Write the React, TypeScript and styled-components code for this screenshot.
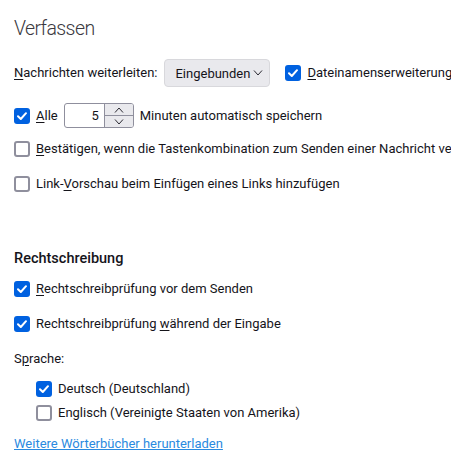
import styled, { createGlobalStyle } from "styled-components";

const Global = createGlobalStyle`
  html, body {
    margin: 0;
    padding: 0;
    background: #ffffff;
    overflow: hidden;
  }
  body {
    font-family: Roboto, "Noto Sans", sans-serif;
    font-size: 13px;
    color: #15141a;
  }
`;

const Page = styled.div`
  width: 451px;
  overflow: hidden;
  padding: 15px 0 0 14px;
  box-sizing: border-box;
  display: flex;
  flex-direction: column;
  white-space: nowrap;
`;

const Heading = styled.h1`
  margin: 0;
  font-size: 19.5px;
  font-weight: 300;
  letter-spacing: -0.6px;
  line-height: 28px;
  color: #3a3940;
`;

const SubHeading = styled.h2`
  margin: 0;
  font-size: 14.5px;
  font-weight: 500;
  line-height: 22px;
  color: #15141a;
`;

const Row = styled.div<{ $top?: number; $indent?: number }>`
  display: flex;
  align-items: center;
  gap: 6px;
  margin-top: ${(p) => p.$top ?? 0}px;
  padding-left: ${(p) => p.$indent ?? 0}px;
  min-height: 24px;
`;

const Box = styled.span<{ $checked?: boolean }>`
  box-sizing: border-box;
  width: 16px;
  height: 16px;
  border-radius: 3px;
  flex: none;
  display: inline-flex;
  align-items: center;
  justify-content: center;
  background: ${(p) => (p.$checked ? "#0061e0" : "#ffffff")};
  border: ${(p) => (p.$checked ? "none" : "2px solid #8f8f9d")};
`;

const Label = styled.span`
  line-height: 20px;
`;

const U = styled.span`
  text-decoration: underline;
  text-underline-offset: 2px;
`;

const Select = styled.div`
  box-sizing: border-box;
  height: 28px;
  padding: 0 6px 0 10px;
  margin-left: 1px;
  margin-right: 9px;
  display: inline-flex;
  align-items: center;
  gap: 3px;
  background: #e9e9ed;
  border: 1px solid #d8d8dc;
  border-radius: 4px;
`;

const Spinner = styled.div`
  box-sizing: border-box;
  display: inline-flex;
  height: 25px;
  border: 1px solid #8f8f9d;
  border-radius: 3px;
  overflow: hidden;
`;

const SpinValue = styled.div`
  width: 39px;
  display: flex;
  align-items: center;
  justify-content: flex-end;
  padding-right: 5px;
  box-sizing: border-box;
`;

const SpinButtons = styled.div`
  width: 28px;
  display: flex;
  flex-direction: column;
  border-left: 1px solid #8f8f9d;
  background: #e9e9ed;
`;

const SpinBtn = styled.div<{ $bottom?: boolean }>`
  flex: 1;
  display: flex;
  align-items: center;
  justify-content: center;
  border-top: ${(p) => (p.$bottom ? "1px solid #8f8f9d" : "none")};
`;

const Link = styled.a`
  color: #2a8ae0;
  text-decoration: underline;
  margin-top: 9px;
  line-height: 20px;
`;

const Check = ({ checked }: { checked?: boolean }) => (
  <Box $checked={checked}>
    {checked && (
      <svg width="12" height="12" viewBox="0 0 12 12">
        <path d="M2 6.3 L4.8 9 L10 3.2" fill="none" stroke="#fff" strokeWidth="2" strokeLinecap="round" strokeLinejoin="round" />
      </svg>
    )}
  </Box>
);

const Chevron = ({ up }: { up?: boolean }) => (
  <svg width="10" height="6" viewBox="0 0 10 6">
    <path d={up ? "M1 5.5 L5 1 L9 5.5" : "M1 0.5 L5 5 L9 0.5"} fill="none" stroke="#2b2a33" strokeWidth="1" />
  </svg>
);

export default function App() {
  return (
    <>
      <Global />
      <Page>
        <Heading>Verfassen</Heading>

        <Row $top={16}>
          <Label>
            <U>N</U>achrichten weiterleiten:
          </Label>
          <Select>
            <span>Eingebunden</span>
            <Chevron />
          </Select>
          <Check checked />
          <Label>
            <U>D</U>ateinamenserweiterung für Anhänge hinzufügen
          </Label>
        </Row>

        <Row $top={16}>
          <Check checked />
          <Label>
            <U>A</U>lle
          </Label>
          <Spinner>
            <SpinValue>5</SpinValue>
            <SpinButtons>
              <SpinBtn>
                <Chevron up />
              </SpinBtn>
              <SpinBtn $bottom>
                <Chevron />
              </SpinBtn>
            </SpinButtons>
          </Spinner>
          <Label>Minuten automatisch speichern</Label>
        </Row>

        <Row $top={9}>
          <Check />
          <Label>
            <U>B</U>estätigen, wenn die Tastenkombination zum Senden einer Nachricht verwendet wird
          </Label>
        </Row>

        <Row $top={11}>
          <Check />
          <Label>
            Link-<U>V</U>orschau beim Einfügen eines Links hinzufügen
          </Label>
        </Row>

        <Row $top={51}>
          <SubHeading>Rechtschreibung</SubHeading>
        </Row>

        <Row $top={6}>
          <Check checked />
          <Label>
            <U>R</U>echtschreibprüfung vor dem Senden
          </Label>
        </Row>

        <Row $top={11}>
          <Check checked />
          <Label>
            Rechtschreibprüfung <U>w</U>ährend der Eingabe
          </Label>
        </Row>

        <Row $top={11}>
          <Label>
            S<U>p</U>rache:
          </Label>
        </Row>

        <Row $top={6} $indent={22}>
          <Check checked />
          <Label>Deutsch (Deutschland)</Label>
        </Row>

        <Row $top={0} $indent={22}>
          <Check />
          <Label>Englisch (Vereinigte Staaten von Amerika)</Label>
        </Row>

        <Link href="#">Weitere Wörterbücher herunterladen</Link>
      </Page>
    </>
  );
}
